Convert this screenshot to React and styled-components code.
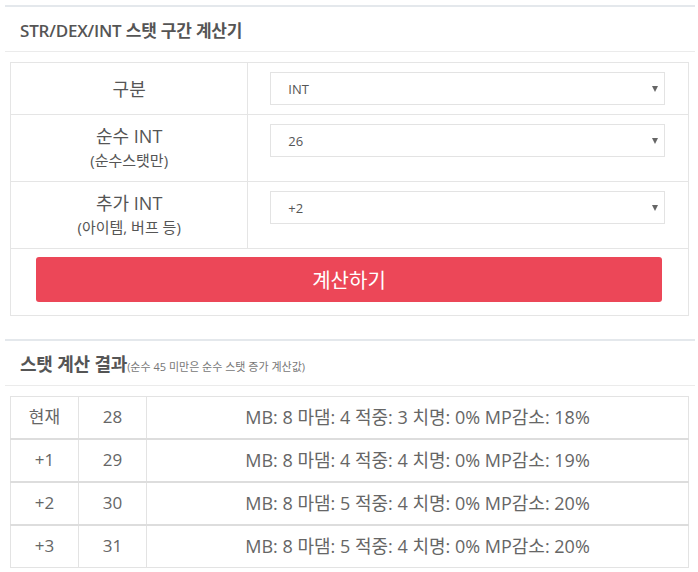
import React, { useState } from 'react'
import styled, { createGlobalStyle } from 'styled-components'

const GlobalStyle = createGlobalStyle`
  body {
    margin: 0;
    background: #fff;
    font-family: "Open Sans", "Noto Sans CJK KR", sans-serif;
    color: #555;
  }
`

const Panel = styled.section`
  margin: ${props => props.top}px 3px 0 5px;
  border-top: 2px solid #e4e8ec;
`

const PanelHeader = styled.div`
  height: 44px;
  display: flex;
  align-items: center;
  padding: 0 15px;
  border-bottom: 1px solid #ebebeb;
  color: #555;
`

const Title = styled.h3`
  margin: 0;
  font-size: ${props => props.size}px;
  font-weight: ${props => props.weight};
  letter-spacing: -0.2px;
`

const TitleNote = styled.small`
  font-size: 11px;
  color: #777;
  font-weight: 400;
  letter-spacing: 0;
`

const PanelBody = styled.div`
  padding: 10px 6px ${props => props.bottom}px 5px;
`

const Table = styled.table`
  width: 100%;
  border-collapse: collapse;
  border: 1px solid #e5e5e5;
  table-layout: ${props => (props.fixed ? 'fixed' : 'auto')};
`

const LabelCell = styled.td`
  width: 35%;
  padding: 9px 8px;
  border: 1px solid #e5e5e5;
  text-align: center;
  vertical-align: middle;
`

const Label = styled.div`
  font-size: 18px;
  line-height: 24px;
  color: #555;
`

const SubLabel = styled.div`
  font-size: 15px;
  line-height: 24px;
  color: #555;
`

const FieldCell = styled.td`
  padding: 9px 23px 9px 22px;
  border: 1px solid #e5e5e5;
  vertical-align: top;
`

const SelectWrap = styled.div`
  position: relative;
  &::after {
    content: '';
    position: absolute;
    right: 7px;
    top: 14px;
    border-left: 3px solid transparent;
    border-right: 3px solid transparent;
    border-top: 6px solid #666;
    pointer-events: none;
  }
`

const Select = styled.select`
  appearance: none;
  -webkit-appearance: none;
  width: 100%;
  height: 33px;
  padding: 0 20px 0 17px;
  border: 1px solid #e3e3e3;
  border-radius: 0;
  background: #fff;
  font-family: "Open Sans", "Noto Sans CJK KR", sans-serif;
  font-size: 13px;
  color: #555;
  outline: none;
`

const ButtonCell = styled.td`
  padding: 8px 26px 13px 25px;
  border: 1px solid #e5e5e5;
`

const CalcButton = styled.button`
  width: 100%;
  height: 45px;
  border: none;
  border-radius: 3px;
  background: #ec4758;
  color: #fff;
  font-family: "Open Sans", "Noto Sans CJK KR", sans-serif;
  font-size: 20px;
  cursor: pointer;
`

const ResultBody = styled.tbody`
  & + & td {
    border-top: 2px solid #dddddd;
  }
`

const ResultCell = styled.td`
  box-sizing: border-box;
  width: ${props => props.w || 'auto'};
  padding: 8px 4px 9px;
  border: 1px solid #e3e3e3;
  text-align: center;
  font-size: ${props => props.size || 17}px;
  line-height: 24px;
  color: #666;
  white-space: nowrap;
`

const stats = ['STR', 'DEX', 'INT', 'LUK']
const bases = Array.from({ length: 40 }, (_, i) => i + 4)
const extras = Array.from({ length: 21 }, (_, i) => i)

const results = [
  { step: '현재', stat: 28, mb: 8, md: 4, acc: 3, crit: 0, mp: 18 },
  { step: '+1', stat: 29, mb: 8, md: 4, acc: 4, crit: 0, mp: 19 },
  { step: '+2', stat: 30, mb: 8, md: 5, acc: 4, crit: 0, mp: 20 },
  { step: '+3', stat: 31, mb: 8, md: 5, acc: 4, crit: 0, mp: 20 },
]

const App = () => {
  const [stat, setStat] = useState('INT')
  const [base, setBase] = useState('26')
  const [extra, setExtra] = useState('2')

  return (
    <>
      <GlobalStyle />
      <Panel top={5}>
        <PanelHeader>
          <Title size={17} weight={600}>STR/DEX/INT 스탯 구간 계산기</Title>
        </PanelHeader>
        <PanelBody bottom={9}>
          <Table>
            <tbody>
              <tr>
                <LabelCell>
                  <Label>구분</Label>
                </LabelCell>
                <FieldCell>
                  <SelectWrap>
                    <Select value={stat} onChange={e => setStat(e.target.value)}>
                      {stats.map(s => <option key={s} value={s}>{s}</option>)}
                    </Select>
                  </SelectWrap>
                </FieldCell>
              </tr>
              <tr>
                <LabelCell>
                  <Label>순수 {stat}</Label>
                  <SubLabel>(순수스탯만)</SubLabel>
                </LabelCell>
                <FieldCell>
                  <SelectWrap>
                    <Select value={base} onChange={e => setBase(e.target.value)}>
                      {bases.map(b => <option key={b} value={b}>{b}</option>)}
                    </Select>
                  </SelectWrap>
                </FieldCell>
              </tr>
              <tr>
                <LabelCell>
                  <Label>추가 {stat}</Label>
                  <SubLabel>(아이템, 버프 등)</SubLabel>
                </LabelCell>
                <FieldCell>
                  <SelectWrap>
                    <Select value={extra} onChange={e => setExtra(e.target.value)}>
                      {extras.map(x => <option key={x} value={x}>+{x}</option>)}
                    </Select>
                  </SelectWrap>
                </FieldCell>
              </tr>
              <tr>
                <ButtonCell colSpan={2}>
                  <CalcButton>계산하기</CalcButton>
                </ButtonCell>
              </tr>
            </tbody>
          </Table>
        </PanelBody>
      </Panel>
      <Panel top={14}>
        <PanelHeader>
          <Title size={18} weight={700}>
            스탯 계산 결과<TitleNote>(순수 45 미만은 순수 스탯 증가 계산값)</TitleNote>
          </Title>
        </PanelHeader>
        <PanelBody bottom={0}>
          <Table fixed>
            {results.map(r => (
              <ResultBody key={r.step}>
                <tr>
                  <ResultCell w="68px">{r.step}</ResultCell>
                  <ResultCell w="68px">{r.stat}</ResultCell>
                  <ResultCell size={18}>
                    MB: {r.mb} 마댐: {r.md} 적중: {r.acc} 치명: {r.crit}% MP감소: {r.mp}%
                  </ResultCell>
                </tr>
              </ResultBody>
            ))}
          </Table>
        </PanelBody>
      </Panel>
    </>
  )
}

export default App
